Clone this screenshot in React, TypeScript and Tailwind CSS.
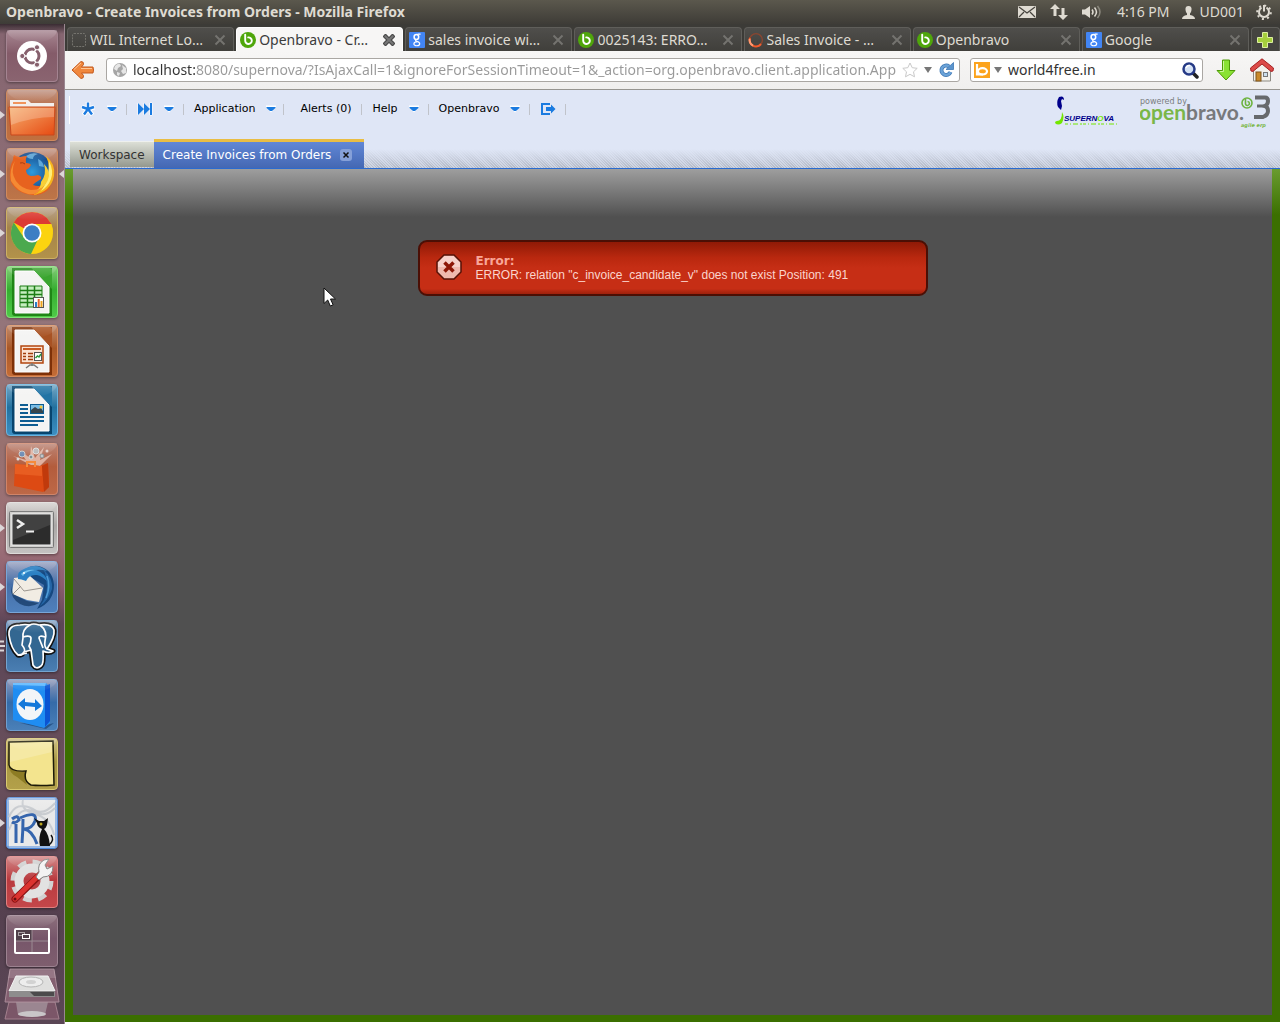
import { ReactNode } from 'react';
import clsx from 'clsx';

type Tile = {
  name: string;
  bg: string;
  running?: boolean;
  focused?: boolean;
  icon: ReactNode;
};

/* ---------- small shared icons ---------- */

function OpenbravoIcon() {
  return (
    <svg className="h-4 w-4 shrink-0" viewBox="0 0 16 16">
      <circle cx="8" cy="8" r="8" fill="#4fa60b" />
      <path d="M5.2 2.6v6a3.3 3.3 0 1 0 3-3.2" fill="none" stroke="#fff" strokeWidth="1.9" strokeLinecap="round" />
    </svg>
  );
}

function GoogleIcon() {
  return (
    <svg className="h-4 w-4 shrink-0" viewBox="0 0 16 16">
      <rect width="16" height="16" rx="1" fill="#4285f4" />
      <ellipse cx="7.4" cy="5" rx="2.3" ry="2.5" fill="none" stroke="#fff" strokeWidth="1.5" />
      <path d="M8.6 2.2h3M7.2 7.4c-1.2.9-.6 1.6.6 2 1.6.5 2.9 1 2.9 2.4 0 2.6-5.8 2.6-5.8.1 0-1.3 1.4-2 3-2" fill="none" stroke="#fff" strokeWidth="1.2" />
    </svg>
  );
}

function BlankIcon() {
  return (
    <svg className="h-4 w-4 shrink-0" viewBox="0 0 16 16">
      <rect x="1.5" y="1.5" width="13" height="13" rx="1.5" fill="none" stroke="#74736d" strokeDasharray="2 1" />
    </svg>
  );
}

function LoadingIcon() {
  return (
    <svg className="h-4 w-4 shrink-0" viewBox="0 0 16 16" fill="none">
      <circle cx="8" cy="8" r="6.4" stroke="#8a4630" strokeWidth="1.4" />
      <path d="M2 5.8A6.4 6.4 0 0 0 13 12" stroke="#f25b2c" strokeWidth="2" />
      <path d="M1.7 7A6.4 6.4 0 0 0 5 13.6" stroke="#ff9a70" strokeWidth="2" />
    </svg>
  );
}

function Cross({ active }: { active?: boolean }) {
  return (
    <svg className="h-3 w-3" viewBox="0 0 12 12">
      {active ? (
        <>
          <path d="M2.5 2.5l7 7M9.5 2.5l-7 7" stroke="#4a4a4a" strokeWidth="4.4" strokeLinecap="square" />
          <path d="M2.5 2.5l7 7M9.5 2.5l-7 7" stroke="#777" strokeWidth="2" strokeLinecap="square" />
        </>
      ) : (
        <path d="M1.5 1.5l9 9M10.5 1.5l-9 9" stroke="#74736f" strokeWidth="2" />
      )}
    </svg>
  );
}

function Caret() {
  return (
    <svg className="h-[10px] w-[12px]" viewBox="0 0 12 10">
      <path d="M1 1.5h10v2L6 8.5 1 3.5z" fill="#fff" />
      <path d="M1.500 3h9v1L7 7H5L1.500 4z" fill="#1b7be0" />
    </svg>
  );
}

/* ---------- launcher ---------- */

function OfficePage({ frame, corner, children }: { frame: string; corner: string; children: ReactNode }) {
  return (
    <>
      <path d="M6 2h40v48H9q-3 0-3-3z" fill={frame} />
      <path d="M25 2h18q3 0 3 3v18z" fill={corner} />
      <path d="M25 2l21 22v5L20 2z" fill={frame} />
      <path d="M9 5h19l15 16v26H9z" fill="#f4f4f3" stroke="#fff" />
      {children}
    </>
  );
}

const tiles: Tile[] = [
  {
    name: 'Dash home',
    bg: 'bg-[linear-gradient(#a88792,#845b69_45%,#8a6470)] border-[#a48491]',
    icon: (
      <>
        <circle cx="26" cy="26" r="15" fill="#fff" />
        <circle cx="26" cy="26" r="7" fill="none" stroke="#86606d" strokeWidth="3" />
        <path d="M26 26H14M26 26l6-10.4M26 26l6 10.4" stroke="#fff" strokeWidth="1.5" />
        <circle cx="16.3" cy="26" r="2.6" fill="#86606d" stroke="#fff" />
        <circle cx="31" cy="17.3" r="2.6" fill="#86606d" stroke="#fff" />
        <circle cx="31" cy="34.7" r="2.6" fill="#86606d" stroke="#fff" />
        <circle cx="26" cy="26" r="5" fill="#fff" />
      </>
    ),
  },
  {
    name: 'Files',
    bg: 'bg-[linear-gradient(#c09484,#b8683f_40%,#c0703f)] border-[#d08a5c]',
    running: true,
    icon: (
      <>
        <path d="M4 11h18l3 3h23v8H4z" fill="#f3efec" />
        <path d="M7 13h13v2H7z" fill="#f0945c" />
        <path d="M3 18h46l-1 28H5z" fill="url(#folder)" stroke="#c9481c" />
        <path d="M4 19h44v9Q26 28 5 36z" fill="#fff" opacity=".22" />
      </>
    ),
  },
  {
    name: 'Firefox',
    bg: 'bg-[linear-gradient(#c09484,#b36a45_40%,#bd7548)] border-[#d08a5c]',
    running: true,
    focused: true,
    icon: (
      <>
        <circle cx="26" cy="24" r="20" fill="url(#globe)" />
        <path d="M20 8q6-4 12-2-5 1-5 5-5 0-7-3zM32 11q5 2 6 8l-5-1z" fill="#7ac4ee" opacity=".7" />
        <path d="M7 12q0-3 1-5 3 2 6 2 4-1 7-1-2 3-1 7 4 0 5 2-1 3-5 5 0 5 5 6 4 0 7-1 4 1 3 4-7 4-8 6 8 3 16-3 3 4-1 8-7 6-16 5Q8 45 4 31 3 19 7 12z" fill="#e7621f" />
        <path d="M9 13q-5 11 1 20 6 8 15 9 8 0 12-3-6 9-15 7-10-2-17-13Q3 21 9 13z" fill="#f58a33" />
        <path d="M40 8q10 8 8 20-3 16-21 19 5-2 8-6 9-8 8-20 0-7-3-13z" fill="#f6b41d" />
        <path d="M43 13q5 10 2 18-3 8-10 12 6-8 7-17 1-6 1-13z" fill="#ffee79" />
        <path d="M38 16q3 10-3 18 0 5-4 8 10-3 12-14 0-7-5-12z" fill="#f8cf36" />
        <path d="M14 15q3-1 5 1" stroke="#a93c12" fill="none" />
      </>
    ),
  },
  {
    name: 'Chrome',
    bg: 'bg-[linear-gradient(#b9a38c,#a5834a_40%,#b2924a)] border-[#cdb062]',
    running: true,
    icon: (
      <>
        <circle cx="26" cy="26" r="21" fill="#fbd30f" />
        <path d="M26 26L7.8 15.5A21 21 0 0 1 44.2 15.5q1 1 1 2H26z" fill="#dc3a33" />
        <path d="M26 26l7 4-8 17A21 21 0 0 1 7.8 15.5l10 15z" fill="#4ba94e" />
        <path d="M26 17h19.5q1 3 1.5 8L26 17z" fill="#fbd30f" />
        <circle cx="26" cy="26" r="9.5" fill="#fff" />
        <circle cx="26" cy="26" r="7.8" fill="#3c7ec4" />
      </>
    ),
  },
  {
    name: 'LibreOffice Calc',
    bg: 'bg-[linear-gradient(#84cc78,#35ad30_45%,#4fc948)] border-[#7fe374]',
    icon: (
      <OfficePage frame="#1f8516" corner="#3aa52f">
        <path d="M14 20h22v21H14z" fill="#c5eebf" stroke="#1d7d15" />
        <path d="M14 24.5h22M14 28.5h22M14 32.5h22M14 36.5h22M21.5 20v21M28.5 20v21" stroke="#1d7d15" strokeWidth="1.5" />
        <rect x="27.5" y="31.5" width="10" height="10" fill="#fff" stroke="#555" />
        <path d="M30 41v-5" stroke="#2c7ec8" strokeWidth="2" />
        <path d="M32.7 41v-8" stroke="#e8632c" strokeWidth="2" />
        <path d="M35.5 41v-6" stroke="#eda41f" strokeWidth="2" />
      </OfficePage>
    ),
  },
  {
    name: 'LibreOffice Impress',
    bg: 'bg-[linear-gradient(#c08a6c,#a85726_45%,#c46c36)] border-[#d98c5c]',
    icon: (
      <OfficePage frame="#7e3108" corner="#a85223">
        <rect x="15" y="21" width="22" height="17" fill="#fbe3d2" stroke="#b2460f" strokeWidth="1.5" />
        <path d="M17 24h18" stroke="#c85a20" strokeWidth="2" />
        <path d="M17 28.5h3M17 31.5h3M17 34.5h3M22 28.5h5M22 31.5h5M22 34.5h5" stroke="#a23d0b" strokeWidth="1.5" />
        <rect x="28.5" y="27.5" width="7" height="8" fill="#fff" stroke="#555" />
        <path d="M29.5 33l2-2 1.5 1 2-3" stroke="#2c9a3c" fill="none" strokeWidth="1.5" />
        <path d="M26 38v3M20 43l4-3h4l4 3" stroke="#777" strokeWidth="1.5" fill="none" />
      </OfficePage>
    ),
  },
  {
    name: 'LibreOffice Writer',
    bg: 'bg-[linear-gradient(#74a6c4,#22719f_45%,#3d8fc2)] border-[#69b4df]',
    icon: (
      <OfficePage frame="#07446d" corner="#2274a5">
        <path d="M14 21h8M14 25h8M14 29h8M14 33h24M14 37h24M14 41h18" stroke="#0e5d92" strokeWidth="2" />
        <rect x="24.5" y="20.5" width="13" height="9" fill="#79bce5" stroke="#0e5d92" />
        <path d="M25 29v-3l4-3 3 2 3-1 2 3v2z" fill="#36454c" />
        <circle cx="35" cy="23" r="1.5" fill="#f5c73c" />
      </OfficePage>
    ),
  },
  {
    name: 'Ubuntu Software Center',
    bg: 'bg-[linear-gradient(#bb8475,#b35c3c_45%,#bd6847)] border-[#d08468]',
    icon: (
      <>
        <path d="M25 22L7 13l13 4-8-11 12 9 1-12 4 12 9-11-4 13 12-6-12 12z" fill="#f2d2c4" opacity=".7" />
        <circle cx="16" cy="11" r="3" fill="#6f8db5" stroke="#ccc" />
        <circle cx="30" cy="8" r="3" fill="#b8b8b8" stroke="#ddd" />
        <circle cx="36" cy="13" r="2" fill="#c2c7ca" stroke="#8d8d8d" />
        <circle cx="25" cy="14" r="2" fill="#7e8f98" stroke="#ddd" />
        <circle cx="12" cy="16" r="1.500" fill="#ddd" />
        <circle cx="41" cy="8" r="1.500" fill="#e3cdc6" />
        <path d="M9 21l25 2 8-3 1 24-6 5L8 43z" fill="#dd4a13" />
        <path d="M36 23l6-3 1 24-5 5z" fill="#c03a0c" />
        <path d="M9 21l27 2v10L9 31z" fill="#f06a2c" opacity=".6" />
        <path d="M21 24v-5h8v5" fill="none" stroke="#f58b3c" strokeWidth="2" />
      </>
    ),
  },
  {
    name: 'Terminal',
    bg: 'bg-[linear-gradient(#d3d0ce,#aaa7a6_45%,#c4c2c1)] border-[#dddbd9]',
    running: true,
    icon: (
      <>
        <rect x="3.5" y="9.5" width="44" height="36" rx="1" fill="#cfcecc" stroke="#777" />
        <rect x="6" y="12" width="39" height="31" fill="#2c2c2c" stroke="#f1f1f1" />
        <path d="M7 13h37v10L7 38z" fill="#555" opacity=".5" />
        <path d="M11 18l6 4-6 4" fill="none" stroke="#eee" strokeWidth="2.5" />
        <path d="M20 29.500h8" stroke="#eee" strokeWidth="2" />
      </>
    ),
  },
  {
    name: 'Thunderbird',
    bg: 'bg-[linear-gradient(#9aa2c0,#466fa8_45%,#4f80bc)] border-[#78a6d8]',
    running: true,
    icon: (
      <>
        <path d="M13 16Q20 3 33 5q14 4 15 19 0 17-17 24l5-9 2-15-14-8z" fill="#164880" />
        <path d="M8 17l16-2 13 12-4 14-12-2L6 33z" fill="#f1ece3" />
        <path d="M8 18l10 12 18-3M7 33l8-8" fill="none" stroke="#9b9690" />
        <path d="M5 25q-1 12 9 18 10 5 19-1l-12-2-14-7z" fill="#163a66" opacity=".75" />
        <path d="M12 18q-1-8 6-10 12-7 23 2-7-2-11-1 9 3 12 12-6-6-11-7-8-1-11 6-5-2-8-2z" fill="#2a80c4" />
        <path d="M15 13q5-5 14-4-9 1-12 6z" fill="#70c0ec" />
        <path d="M38 9q9 8 8 19-4 12-12 17 7-9 7-19 0-9-3-17z" fill="#2566a7" />
        <path d="M41 15q4 10-1 22" stroke="#4f9cd8" fill="none" strokeWidth="1.500" />
        <circle cx="18" cy="12" r="1" fill="#fff" />
      </>
    ),
  },
  {
    name: 'pgAdmin',
    bg: 'bg-[linear-gradient(#8fa6c4,#386a9c_45%,#4a7eb2)] border-[#74a4cf]',
    icon: (
      <>
        <g stroke="#111" strokeWidth="5" strokeLinejoin="round">
          <path d="M14 5Q2 5 3 15q2 14 9 20 4 1 6-3l7-2 2 15q3 5 8 1 3-2 2-15 6 3 10 0l-6-2q8-12 7-19Q46 3 33 5q-6-2-9 0-5-1-10 0z" />
        </g>
        <g fill="#336791" stroke="#fff" strokeWidth="1.700" strokeLinejoin="round">
          <path d="M14 5Q2 5 3 15q2 14 9 20 4 1 6-3l7-2 2 15q3 5 8 1 3-2 2-15 6 3 10 0l-6-2q8-12 7-19Q46 3 33 5q-6-2-9 0-5-1-10 0z" />
          <path d="M24 5q-8 4-7 13l-1 7q4 5 2 7M17 17q7-2 8 1 0 5-2 8l2 4M34 5q8 6 5 16-1 6 2 8M39 17q-6-2-6 1l4 10M12 35q6-1 9-2" fill="none" />
        </g>
      </>
    ),
  },
  {
    name: 'TeamViewer',
    bg: 'bg-[linear-gradient(#9098b8,#356ba8_45%,#4a80b8)] border-[#6f9fd0]',
    icon: (
      <>
        <path d="M40 46l8-2-8 6-26-6z" fill="#163b6b" opacity=".6" />
        <path d="M7 4h33l4 4v36l-6 5-31-8z" fill="#1f8df2" />
        <path d="M39 7l5-2v37l-5 6z" fill="#0b54d2" />
        <path d="M7 4h33l-1 3-32-1z" fill="#5cb8ff" />
        <ellipse cx="24" cy="25.500" rx="13.500" ry="15.500" fill="#f2f5f8" />
        <path d="M12 25l7-6v4l10 1v-4l7 7-7 5v-4l-10-1v4z" fill="#1478da" />
      </>
    ),
  },
  {
    name: 'Notes',
    bg: 'bg-[linear-gradient(#cdbf86,#a79742_45%,#b3a04a)] border-[#d9c96f]',
    icon: (
      <>
        <path d="M3 28q0 7 8 11l10 8q-3-6-1-13z" fill="#8d7c24" />
        <path d="M3 4l44-1 1 44q-15 1-23 0-8-4-5-14-16 1-17-6z" fill="#f3e48e" stroke="#1c1a08" strokeWidth="1.5" />
        <path d="M4 5l42-1v10L4 24z" fill="#fff" opacity=".2" />
      </>
    ),
  },
  {
    name: 'iReport',
    bg: 'bg-[#f0f0f0] border-[#4a86d8]',
    running: true,
    icon: (
      <>
        <path d="M2 2h48v48H2z" fill="#e9e9e9" stroke="#4a86d8" />
        <path d="M3 20Q10 3 27 12q10 8 22-6M3 33Q14 5 31 16q9 4 18-5M17 3q-3 10 12 14t19 21" stroke="#c9ccd0" fill="none" strokeWidth="2" />
        <g stroke="#3565ad" fill="none" strokeWidth="3">
          <path d="M10 27v19M6 22q6-5 7 1-4 4-7 2" />
          <path d="M17 22q0 12-1 24M14 21q18-8 15 3-3 8-11 8 8 1 13 15" />
        </g>
        <path d="M28 21l5 3h5l4-3-1 7q-1 3-3 4 5 5 6 17H34q-2-9 2-17-5-2-5-6z" fill="#111" />
        <path d="M43 48q6-5 2-10" stroke="#111" strokeWidth="1.5" fill="none" />
        <circle cx="35" cy="27" r="1.5" fill="#bba71e" />
      </>
    ),
  },
  {
    name: 'System Settings',
    bg: 'bg-[linear-gradient(#d28888,#b93a3f_45%,#c4474a)] border-[#e08080]',
    icon: (
      <>
        <circle cx="26" cy="25" r="18" fill="none" stroke="#d2d2d2" strokeWidth="7" strokeDasharray="8.140 6" />
        <circle cx="26" cy="25" r="13" fill="none" stroke="#e2e2e2" strokeWidth="9" />
        <path d="M9 43L36 17" stroke="#8a1313" strokeWidth="7" strokeLinecap="round" />
        <path d="M9 43L32 20" stroke="#dc3330" strokeWidth="5" strokeLinecap="round" />
        <path d="M30 21l3-5q-2-8 5-12l5-1-4 6 2 4 6-3q0 11-10 11l-4 3z" fill="#f3f3f3" stroke="#858585" />
        <circle cx="9" cy="43" r="1.5" fill="#641010" />
      </>
    ),
  },
  {
    name: 'Workspace Switcher',
    bg: 'bg-[linear-gradient(#8c6f7c,#77566a_45%,#7e5e6e)] border-[#9c8290]',
    icon: (
      <>
        <path d="M9 14h17v12H9z" fill="#50404a" />
        <path d="M26 14v24M9 26h34" stroke="#9b8b93" />
        <rect x="9" y="14" width="34" height="24" rx="1" fill="none" stroke="#fff" strokeWidth="2" />
        <rect x="12.5" y="17.5" width="6" height="3" fill="none" stroke="#a8a0a4" />
        <rect x="16.5" y="19.5" width="7" height="4" fill="#50404a" stroke="#fff" />
      </>
    ),
  },
];

function Launcher() {
  return (
    <nav
      aria-label="Launcher"
      className="flex w-[65px] shrink-0 flex-col items-center gap-[7px] border-r border-[#9a8790] pt-[6px] pr-px
                 bg-[linear-gradient(#3a2c33_0,#856570_10px,#94757a_30%,#98716f_42%,#9c7078_52%,#8d5d6e_56%,#5b4556_60%,#6a505c_75%,#55404f_88%,#5a4655)]"
    >
      {tiles.map((t) => (
        <button
          key={t.name}
          aria-label={t.name}
          className={clsx('relative h-[52px] w-[52px] shrink-0 rounded-[4px] border shadow-[0_1px_3px_#0006]', t.bg)}
        >
          <svg className="-m-px h-[52px] w-[52px]" viewBox="0 0 52 52">
            <defs>
              <linearGradient id="folder" x1="0" y1="0" x2="1" y2="1">
                <stop offset="0" stopColor="#f6b070" />
                <stop offset="1" stopColor="#e64a12" />
              </linearGradient>
              <radialGradient id="globe">
                <stop offset="0" stopColor="#2f9bdc" />
                <stop offset="1" stopColor="#164a8c" />
              </radialGradient>
              <linearGradient id="gloss" x1="0" y1="0" x2="0" y2="1">
                <stop offset="0" stopColor="#fff" stopOpacity=".4" />
                <stop offset="1" stopColor="#fff" stopOpacity="0" />
              </linearGradient>
            </defs>
            {t.icon}
            <ellipse cx="26" cy="0" rx="25" ry="13" fill="url(#gloss)" />
          </svg>
          {t.running && (
            <svg className="absolute top-[21px] -left-[7px] h-2 w-[5px]" viewBox="0 0 5 8">
              <path d="M0 0l5 4-5 4z" fill="#dcd6d8" />
            </svg>
          )}
          {t.focused && (
            <svg className="absolute top-[21px] -right-[7px] h-2 w-[5px]" viewBox="0 0 5 8">
              <path d="M5 0L0 4l5 4z" fill="#dcd6d8" />
            </svg>
          )}
          {t.name === 'pgAdmin' && (
            <svg className="absolute top-[19px] -left-[7px] h-3 w-[5px]" viewBox="0 0 5 12">
              <path d="M0 1.5h4M0 6h5M0 10.5h4" stroke="#dcd6d8" strokeWidth="2" />
            </svg>
          )}
        </button>
      ))}
      {/* folded items at the end of the launcher */}
      <button aria-label="Disk" className="-mt-[6px] h-[54px] w-[56px]">
        <svg className="h-[54px] w-[56px]" viewBox="0 0 56 54">
          <path d="M5 34h46l4 17H1z" fill="#7b5668" stroke="#a3808e" />
          <path d="M12 34h32l-3 13H14z" fill="#a99ba2" opacity=".7" />
          <ellipse cx="28" cy="46" rx="14" ry="3" fill="#c9c6c8" />
          <path d="M6 1h44l5 33H1z" fill="#835f70" stroke="#a98b98" />
          <path d="M6 1h44l2 9H4z" fill="#fff" opacity=".15" />
          <path d="M12 8h32l7 15H5z" fill="#dfdfde" stroke="#f3f3f3" />
          <path d="M5 23h46v6H5z" fill="#8e8d8d" />
          <path d="M26 24h24v4H30z" fill="#4c4b4c" />
          <ellipse cx="27" cy="14" rx="12" ry="5" fill="#ededed" stroke="#b5b5b5" />
          <ellipse cx="27" cy="14" rx="5" ry="2" fill="#d2d2d2" />
        </svg>
      </button>
    </nav>
  );
}

/* ---------- system panel ---------- */

function Panel() {
  return (
    <header className="flex h-6 shrink-0 items-center bg-[linear-gradient(#5b584d,#3e3c37)] pr-2 pl-[6px] text-[#dfdbd2]">
      <h1 className="flex-1 truncate text-sm leading-6 font-bold">Openbravo - Create Invoices from Orders - Mozilla Firefox</h1>
      <div className="flex items-center text-sm leading-6">
        <svg className="mr-[14px] h-3 w-[18px]" viewBox="0 0 18 12">
          <rect width="18" height="12" rx="1" fill="#dfdbd2" />
          <path d="M1 1l8 6 8-6M1 11l5-5M17 11l-5-5" fill="none" stroke="#45433d" strokeWidth="1.2" />
        </svg>
        <svg className="mr-[14px] h-4 w-[18px]" viewBox="0 0 18 16" fill="#dfdbd2">
          <path d="M5 0l5 5H6.500v7h-3V5H0zM13 16l-5-5h3.500V4h3v7H18z" />
        </svg>
        <svg className="mr-[15px] h-[14px] w-5" viewBox="0 0 20 14" fill="none" stroke="#dfdbd2" strokeWidth="1.5">
          <path d="M0 4.5h3L8 1v12L3 9.5H0z" fill="#dfdbd2" stroke="none" />
          <path d="M10 4.5q2 2.5 0 5M12.5 2.5q4 4.5 0 9" />
          <path d="M15.5 1q5 6 0 12" stroke="#8b887e" />
        </svg>
        <time className="mr-3">4:16 PM</time>
        <svg className="mr-[5px] h-[13px] w-[13px]" viewBox="0 0 13 13" fill="#dfdbd2">
          <path d="M6.500 0q3.500 0 3 4-.3 2.500-1.500 3.500v1.500q5 .8 5 4H0q0-3.200 5-4V7.500Q3.800 6.500 3.500 4q-.5-4 3-4z" />
        </svg>
        <span className="mr-3">UD001</span>
        <svg className="h-4 w-4" viewBox="0 0 16 16" fill="none" stroke="#dfdbd2">
          <path d="M5.5 3.7a5 5 0 1 0 5 0" strokeWidth="2" />
          <path d="M8 1v6.5" strokeWidth="2" />
          <circle cx="8" cy="8.3" r="6.8" strokeWidth="2" strokeDasharray="2 3.340" />
        </svg>
      </div>
    </header>
  );
}

/* ---------- firefox chrome ---------- */

const browserTabs = [
  { title: 'WIL Internet Lo…', icon: <BlankIcon /> },
  { title: 'Openbravo - Cr…', icon: <OpenbravoIcon />, active: true },
  { title: 'sales invoice wi…', icon: <GoogleIcon /> },
  { title: '0025143: ERRO…', icon: <OpenbravoIcon /> },
  { title: 'Sales Invoice - …', icon: <LoadingIcon /> },
  { title: 'Openbravo', icon: <OpenbravoIcon /> },
  { title: 'Google', icon: <GoogleIcon /> },
];

function BrowserTabs() {
  return (
    <div className="flex h-[27px] shrink-0 items-end gap-[2px] bg-[#3c3b37] pl-[2px]">
      {browserTabs.map((t, i) => (
        <div
          key={i}
          className={clsx(
            'flex h-6 min-w-0 flex-1 items-center rounded-t-[4px] border border-b-0 pr-[7px] pl-[3px]',
            t.active
              ? 'border-white bg-[#f7f6f5] text-[#3c3c3c]'
              : 'border-[#5f5e5a] bg-[linear-gradient(#4f4e4b,#403f3b)] text-[#dfdbd2]'
          )}
        >
          <button className="flex min-w-0 flex-1 items-center gap-[3px] text-left text-sm leading-6 whitespace-nowrap">
            {t.icon}
            <span className="overflow-hidden">{t.title}</span>
          </button>
          <button aria-label={`Close ${t.title}`} className="ml-1">
            <Cross active={t.active} />
          </button>
        </div>
      ))}
      <button
        aria-label="New tab"
        className="flex h-6 w-[29px] items-center justify-center rounded-t-[4px] border border-b-0 border-[#5f5e5a] bg-[#454440]"
      >
        <svg className="h-4 w-4" viewBox="0 0 16 16">
          <path d="M5.5.5h5v5h5v5h-5v5h-5v-5h-5v-5h5z" fill="#a5cf3c" stroke="#dcefa0" />
        </svg>
      </button>
    </div>
  );
}

function NavBar() {
  return (
    <div className="flex h-[39px] shrink-0 items-center border-b border-[#979590] bg-[linear-gradient(#f7f6f5,#f0efee)] pr-[6px] pl-[6px]">
      <button aria-label="Back" className="mr-[11px]">
        <svg className="h-5 w-6" viewBox="0 0 24 20">
          <path d="M1 10L10 1.5q3 0 2.5 3L10.5 7H22q1 3 0 6H10.5l2 2.5q.5 3-2.5 3z" fill="#f0883e" stroke="#c4581c" />
          <path d="M3 9.5L10 3M10 8.5h11" stroke="#ffc795" fill="none" />
        </svg>
      </button>
      <div className="mr-[10px] flex h-6 min-w-0 flex-1 items-center rounded-[3px] border border-[#aaa7a3] bg-white px-[5px]">
        <svg className="mr-[5px] h-4 w-4 shrink-0" viewBox="0 0 16 16">
          <circle cx="8" cy="8" r="7" fill="#a6a6a6" />
          <path d="M3 4q3-3 5-2l1 2-3 2-1 3-3-2zM10 3l4 3v5l-3 1-2-3 2-2zM5 10l3 1-1 3-2-1z" fill="#e6e6e6" />
        </svg>
        <input
          aria-label="Address"
          readOnly
          className="h-5 min-w-0 flex-1 bg-[linear-gradient(90deg,#333_62px,#999_62px)] bg-clip-text text-sm text-transparent outline-none"
          value="localhost:8080/supernova/?IsAjaxCall=1&ignoreForSessionTimeout=1&_action=org.openbravo.client.application.ApplicationManager"
        />
        <button aria-label="Bookmark this page" className="ml-[6px]">
          <svg className="h-4 w-4" viewBox="0 0 16 16">
            <path d="M8 1l2.2 4.7 5 .6-3.7 3.5 1 5L8 12.3l-4.5 2.5 1-5L.8 6.3l5-.6z" fill="#fff" stroke="#c9c9c9" />
          </svg>
        </button>
        <button aria-label="History" className="ml-[6px]">
          <svg className="h-2 w-2" viewBox="0 0 8 8">
            <path d="M0 1h8L4 7z" fill="#777" />
          </svg>
        </button>
        <button aria-label="Reload" className="ml-[6px]">
          <svg className="h-4 w-4" viewBox="0 0 16 16">
            <path d="M11 4.5A4.7 4.7 0 1 0 12.5 10" fill="none" stroke="#3f78b5" strokeWidth="4" />
            <path d="M11 4.5A4.7 4.7 0 1 0 12.5 10" fill="none" stroke="#6ba3d8" strokeWidth="2.4" />
            <path d="M8 7.5h7.5V.5z" fill="#5a94cd" stroke="#3f78b5" strokeWidth=".8" />
          </svg>
        </button>
      </div>
      <div className="mr-[13px] flex h-6 w-[233px] items-center rounded-[3px] border border-[#aaa7a3] bg-white px-[3px]">
        <button aria-label="Search engine" className="flex items-center gap-1">
          <svg className="h-4 w-4" viewBox="0 0 16 16">
            <rect width="16" height="16" fill="#fca31c" />
            <path d="M3 2v10.5h6" fill="none" stroke="#fff" strokeWidth="2.2" />
            <ellipse cx="8.5" cy="9.3" rx="4.5" ry="3.2" fill="none" stroke="#fff" strokeWidth="2.2" />
          </svg>
          <svg className="h-2 w-2" viewBox="0 0 8 8">
            <path d="M0 1h8L4 7z" fill="#777" />
          </svg>
        </button>
        <input
          aria-label="Search"
          defaultValue="world4free.in"
          className="ml-[6px] h-5 min-w-0 flex-1 text-sm text-[#333] outline-none"
        />
        <button aria-label="Go">
          <svg className="h-[18px] w-[18px]" viewBox="0 0 18 18">
            <path d="M12 12l4 4" stroke="#222" strokeWidth="3.5" strokeLinecap="round" />
            <circle cx="8" cy="8" r="5.5" fill="#d5e2f5" stroke="#263a86" strokeWidth="2.5" />
            <path d="M5 7q1-3 4-2.5" stroke="#fff" strokeWidth="1.5" fill="none" />
          </svg>
        </button>
      </div>
      <button aria-label="Downloads" className="mr-[14px]">
        <svg className="h-6 w-5" viewBox="0 0 20 24">
          <path d="M6.5 2h7v10.5H19L10 22 1 12.5h5.5z" fill="#8ae234" stroke="#4e9a06" />
          <path d="M7.5 3v10.5H4" stroke="#cbf79a" fill="none" />
        </svg>
      </button>
      <button aria-label="Home">
        <svg className="h-6 w-6" viewBox="0 0 24 24">
          <path d="M3.5 11L12 4l8.500 7v12h-17z" fill="#f3f1ec" stroke="#8d8a83" />
          <rect x="6" y="14" width="5" height="9" fill="#c88a2c" stroke="#80551a" />
          <rect x="13.5" y="14.5" width="4" height="4" fill="#cde0ee" stroke="#777" />
          <path d="M1 13l-.5-3L12 .8l11.500 9.200-.5 3-2 .4L12 6l-9 7.400z" fill="#dc4a48" stroke="#a52222" />
        </svg>
      </button>
    </div>
  );
}

/* ---------- openbravo ---------- */

function Separator() {
  return <span className="h-[11px] w-px bg-[#c0c3ca]" />;
}

function MenuBar() {
  return (
    <div className="flex h-[38px] items-center pl-1 text-[11px] leading-4 text-black">
      <span className="mt-[1px] h-7 w-px bg-white" />
      <button aria-label="Create new" className="ml-[10px] flex items-center gap-[10px]">
        <svg className="h-4 w-4" viewBox="0 0 16 16">
          <path d="M8 8V1M8 8l6.500-2M8 8l4.500 6M8 8l-4.500 6M8 8L1.500 6" stroke="#fff" strokeWidth="4.500" />
          <path d="M8 8V1.500M8 8l6-2M8 8l4 5.500M8 8l-4 5.500M8 8L2 6" stroke="#1b7be0" strokeWidth="2.400" />
        </svg>
        <Caret />
      </button>
      <span className="w-2" />
      <Separator />
      <button aria-label="Quick launch" className="ml-[10px] flex items-center gap-[10px]">
        <svg className="h-[14px] w-4" viewBox="0 0 16 14">
          <path d="M1 1l6 6-6 6zM7 1l6 6-6 6zM13 1h2v12h-2z" fill="#1b7be0" stroke="#fff" strokeWidth="1" paintOrder="stroke" />
        </svg>
        <Caret />
      </button>
      <span className="w-2" />
      <Separator />
      <button className="ml-[10px] flex items-center gap-[10px]">
        Application
        <Caret />
      </button>
      <span className="w-[6px]" />
      <Separator />
      <button className="mr-[10px] ml-4">Alerts (0)</button>
      <Separator />
      <button className="ml-[10px] flex items-center gap-[10px]">
        Help
        <Caret />
      </button>
      <span className="w-2" />
      <Separator />
      <button className="ml-[10px] flex items-center gap-[10px]">
        Openbravo
        <Caret />
      </button>
      <span className="w-2" />
      <Separator />
      <button aria-label="Log out" className="mr-[9px] ml-[11px]">
        <svg className="h-3 w-[15px]" viewBox="0 0 15 12">
          <path d="M9 1H1v10h8" fill="none" stroke="#1b7be0" strokeWidth="2" />
          <path d="M5 4h5V1.5L14.5 6 10 10.5V8H5z" fill="#1b7be0" />
        </svg>
      </button>
      <Separator />
    </div>
  );
}

function Logos() {
  return (
    <div className="flex items-start gap-5 pt-[5px] pr-[9px]">
      <svg className="h-[34px] w-[65px]" viewBox="0 0 65 34">
        <path d="M4 2q5-2 5 3l-2-1-1 2 1 5-1 4-3-3q-2-5 1-10z" fill="#00008b" />
        <path d="M7 17q3 5 0 11-4 3-7 0 0-2 2-2 5 0 5-9z" fill="#73e600" />
        <text x="9" y="26" fontSize="8" fontWeight="bold" fontStyle="italic" fontFamily="Liberation Sans, sans-serif" fill="#00008b">
          SUPERN<tspan fill="#73e600">O</tspan>VA
        </text>
        <path d="M10 29h52" stroke="#73e600" strokeDasharray="3 2 1 2 5 2 2 1" />
      </svg>
      <svg className="h-[36px] w-[131px]" viewBox="0 0 131 36">
        <text x="0" y="9" fontSize="8" fontFamily="DejaVu Sans, sans-serif" fill="#7a7d80">
          powered by
        </text>
        <text x="-1" y="25" fontSize="21" fontWeight="bold" fontFamily="Lato, sans-serif" fill="#77797c">
          <tspan fill="#7ab648">open</tspan>bravo.
        </text>
        <circle cx="107" cy="8" r="5" fill="none" stroke="#6db33f" strokeWidth="1.6" />
        <path d="M105.500 4v5a2 2 0 1 0 2-2.500" fill="none" stroke="#6db33f" strokeWidth="1.600" />
        <path d="M115 2.500h10q3 0 3 3.500t-3 5q3 1 3 5t-5 6h-9" fill="none" stroke="#67696c" strokeWidth="4" />
        <path d="M117 11h9" stroke="#67696c" strokeWidth="3" />
        <text x="101" y="32" fontSize="5" fontWeight="bold" fontStyle="italic" fontFamily="DejaVu Sans, sans-serif" fill="#7ab648">
          agile erp
        </text>
      </svg>
    </div>
  );
}

function AppHeader() {
  return (
    <div className="flex shrink-0 flex-col border-b border-[#2a6bd0] bg-[#dfe6f6] font-['DejaVu_Sans',sans-serif]">
      <div className="flex h-[49px] items-start justify-between">
        <MenuBar />
        <Logos />
      </div>
      <div className="flex h-[29px] items-end bg-[linear-gradient(#dfe6f6_35%,#dfe6f600),repeating-linear-gradient(45deg,#b3b9c6_0_1px,#ccd2e0_1px_2px)] pl-[5px] text-xs">
        <button className="mb-px h-[26px] border-t border-[#eef0ee] bg-[linear-gradient(#dcdfd6,#94988e)] px-[9px] text-[#333]">
          Workspace
        </button>
        <div className="flex h-[29px] items-center border-t-[3px] border-[#e9bd44] bg-[linear-gradient(#6187d6,#4468b3)] pr-3 pl-[9px] text-white">
          <button>Create Invoices from Orders</button>
          <button aria-label="Close tab" className="ml-[9px] rounded-[3px] bg-[#85a0d8]">
            <svg className="h-3 w-3" viewBox="0 0 12 12">
              <path d="M3.500 3.500l5 5M8.500 3.500l-5 5" stroke="#111" strokeWidth="1.500" />
            </svg>
          </button>
        </div>
      </div>
    </div>
  );
}

function ErrorMessage() {
  return (
    <div
      role="alert"
      className="flex h-14 w-[510px] items-start rounded-[9px] border-2 border-[#4b0f05] bg-[linear-gradient(#8f1a06,#b9280f_30%,#c62e15_50%,#c62e15_90%,#9e210c)] pt-3 pl-4"
    >
      <svg className="mr-[14px] h-[26px] w-[26px]" viewBox="0 0 26 26">
        <path d="M8 1h10l7 7v10l-7 7H8l-7-7V8z" fill="#f0b9ae" stroke="#561207" strokeWidth="1.5" />
        <path d="M8.5 2h9l6.5 6.5V13H2V8.5z" fill="#f9dcd6" opacity=".7" />
        <path d="M8.500 8.500l9 9M17.500 8.500l-9 9" stroke="#8d1707" strokeWidth="3.500" />
      </svg>
      <div className="text-xs leading-[14px] text-[#fbd5cd]">
        <p className="font-['DejaVu_Sans',sans-serif] font-bold text-[#f9a698]">Error:</p>
        <p className="font-['Liberation_Sans',Arial,sans-serif]">
          ERROR: relation "c_invoice_candidate_v" does not exist Position: 491
        </p>
      </div>
    </div>
  );
}

export default function App() {
  return (
    <div className="flex min-h-screen flex-col bg-white font-['Noto_Sans',sans-serif]">
      <Panel />
      <div className="flex flex-1">
        <Launcher />
        <div className="flex min-w-0 flex-1 flex-col pb-[2px]">
          <BrowserTabs />
          <NavBar />
          <AppHeader />
          <main className="flex flex-1 flex-col bg-[#3b6f00] bg-[linear-gradient(#6a9c30,#3b6f00_46px)] px-2 pb-[7px]">
            <div className="relative flex flex-1 flex-col items-center bg-[linear-gradient(#9e9e9e,#505050_48px)] pt-[71px]">
              <ErrorMessage />
              {/* mouse pointer */}
              <svg className="absolute top-[118px] left-[250px] h-5 w-[14px]" viewBox="0 0 14 20">
                <path d="M1 1v15.500l3.700-3.500 2.600 6 2.800-1.200-2.600-5.800h5z" fill="#fff" stroke="#111" />
              </svg>
            </div>
          </main>
        </div>
      </div>
    </div>
  );
}
